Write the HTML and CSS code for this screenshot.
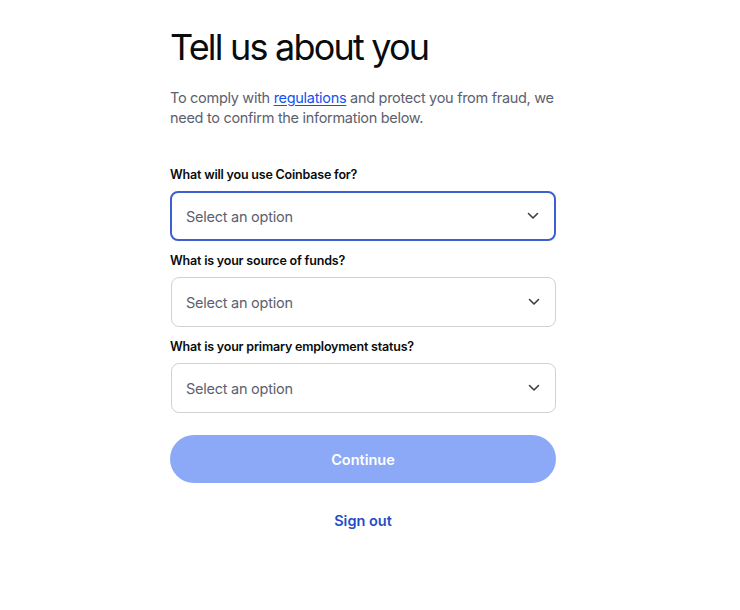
FILE: index.html
```html
<!DOCTYPE html>
<html lang="en">
<head>
<meta charset="utf-8">
<title>Tell us about you</title>
<link rel="stylesheet" href="styles.css">
</head>
<body>
<main class="page">
  <h1 class="title">Tell us about you</h1>
  <p class="intro">To comply with <a href="#" class="link">regulations</a> and protect you from fraud, we need to confirm the information below.</p>
  <form class="form">
    <div class="field">
      <label class="label">What will you use Coinbase for?</label>
      <div class="select select--focus">
        <span class="placeholder">Select an option</span>
        <svg class="chev" width="12" height="8" viewBox="0 0 12 8"><path d="M1.5 1.5 L6 6 L10.5 1.5" fill="none" stroke="#3c3f44" stroke-width="1.6" stroke-linecap="round" stroke-linejoin="round"/></svg>
      </div>
    </div>
    <div class="field">
      <label class="label">What is your source of funds?</label>
      <div class="select">
        <span class="placeholder">Select an option</span>
        <svg class="chev" width="12" height="8" viewBox="0 0 12 8"><path d="M1.5 1.5 L6 6 L10.5 1.5" fill="none" stroke="#3c3f44" stroke-width="1.6" stroke-linecap="round" stroke-linejoin="round"/></svg>
      </div>
    </div>
    <div class="field">
      <label class="label">What is your primary employment status?</label>
      <div class="select">
        <span class="placeholder">Select an option</span>
        <svg class="chev" width="12" height="8" viewBox="0 0 12 8"><path d="M1.5 1.5 L6 6 L10.5 1.5" fill="none" stroke="#3c3f44" stroke-width="1.6" stroke-linecap="round" stroke-linejoin="round"/></svg>
      </div>
    </div>
    <button type="button" class="continue">Continue</button>
    <a href="#" class="signout">Sign out</a>
  </form>
</main>
</body>
</html>
```
FILE: styles.css
```css
* { box-sizing: border-box; }
html, body { margin: 0; padding: 0; background: #ffffff; }
body {
  font-family: Inter, "Noto Sans", "Liberation Sans", sans-serif;
  color: #0a0b0d;
}
.page {
  width: 386px;
  margin-left: 170px;
  padding-top: 25px;
}
.title {
  margin: 0;
  font-size: 36px;
  line-height: 44px;
  font-weight: 400;
  letter-spacing: -1.8px;
  color: #0a0b0d;
}
.intro {
  margin: 19px 0 0;
  font-size: 14.5px;
  line-height: 20px;
  letter-spacing: -0.3px;
  color: #5b616e;
}
.link {
  color: #1652f0;
  text-decoration: underline;
  text-underline-offset: 2px;
}
.form {
  display: flex;
  flex-direction: column;
  margin-top: 39px;
}
.field {
  display: flex;
  flex-direction: column;
  gap: 8px;
  margin-bottom: 12px;
}
.label {
  font-size: 12.5px;
  line-height: 16px;
  font-weight: 600;
  letter-spacing: -0.2px;
  color: #0a0b0d;
}
.select {
  height: 50px;
  margin-left: 1px;
  border: 1px solid #cfd1d6;
  border-radius: 8px;
  display: flex;
  align-items: center;
  justify-content: space-between;
  padding: 0 15px 0 14px;
}
.select--focus {
  margin-left: 0;
  border: 2px solid #3d5fd1;
  padding-left: 14px;
}
.placeholder {
  font-size: 14.5px;
  letter-spacing: -0.25px;
  color: #5b616e;
}
.chev { display: block; }
.continue {
  margin-top: 10px;
  height: 48px;
  border: 0;
  border-radius: 24px;
  background: #8ca9f7;
  color: #ffffff;
  font-family: inherit;
  font-size: 14.5px;
  font-weight: 600;
}
.signout {
  align-self: center;
  margin-top: 29px;
  font-size: 14.5px;
  line-height: 18px;
  font-weight: 600;
  color: #1f4dc6;
  text-decoration: none;
}
```
